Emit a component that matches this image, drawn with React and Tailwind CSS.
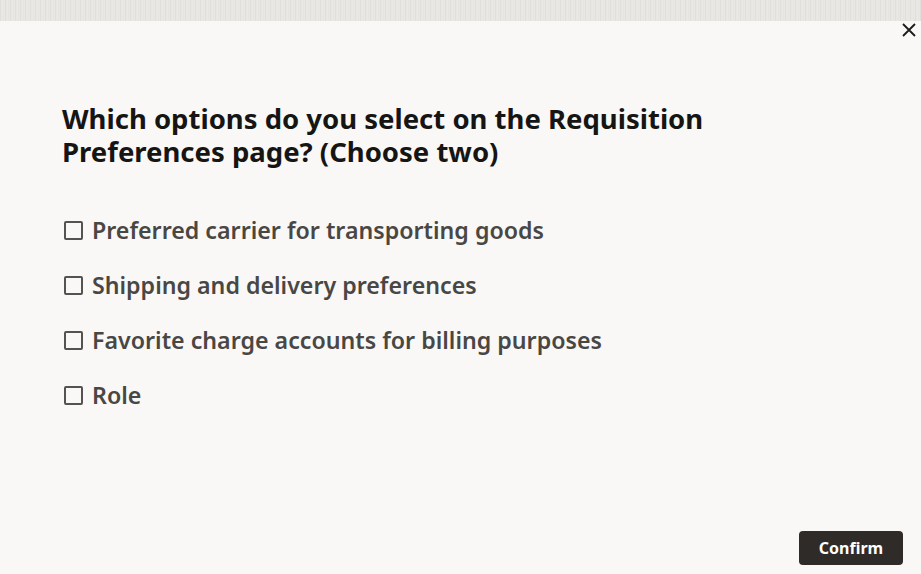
const options = [
  "Preferred carrier for transporting goods",
  "Shipping and delivery preferences",
  "Favorite charge accounts for billing purposes",
  "Role",
];

export default function App() {
  return (
    <div
      className="w-[921px] h-[574px] flex flex-col bg-[#f9f8f6] overflow-hidden"
      style={{ fontFamily: '"Noto Sans", "Open Sans", sans-serif' }}
    >
      <div className="h-[21px] shrink-0 bg-[#e9e7e4] bg-[repeating-linear-gradient(90deg,#e1dfdc_0px,#e1dfdc_1px,#f0eeeb_2px,#e5e3e0_3px,#ebe9e6_5px)]" />
      <div className="relative flex-1 flex flex-col">
        <button className="absolute right-[3px] top-0 w-[18px] h-[18px] flex items-center justify-center text-[#1b1b1b]">
          <svg width="16" height="16" viewBox="0 0 16 16" fill="none" stroke="currentColor" strokeWidth="1.8">
            <path d="M2 2 L14 14 M14 2 L2 14" />
          </svg>
        </button>
        <div className="pl-[62px] pt-[81px]">
          <h1 className="text-[27.5px] leading-[33px] font-bold text-[#161513] w-[700px]">
            Which options do you select on the Requisition Preferences page? (Choose two)
          </h1>
          <ul className="mt-[48px] flex flex-col gap-[26px]">
            {options.map((o) => (
              <li key={o} className="flex items-center gap-[9px] text-[23.2px] leading-[29px] font-semibold text-[#494744]">
                <span className="ml-[2px] w-[19px] h-[19px] border-2 border-[#55534f] rounded-[2px] shrink-0" />
                {o}
              </li>
            ))}
          </ul>
        </div>
        <div className="mt-auto flex justify-end pr-[18px] pb-[9px]">
          <button className="w-[104px] h-[34px] rounded-[4px] bg-[#2f2b28] text-white text-[16px] font-bold">
            Confirm
          </button>
        </div>
      </div>
    </div>
  );
}
